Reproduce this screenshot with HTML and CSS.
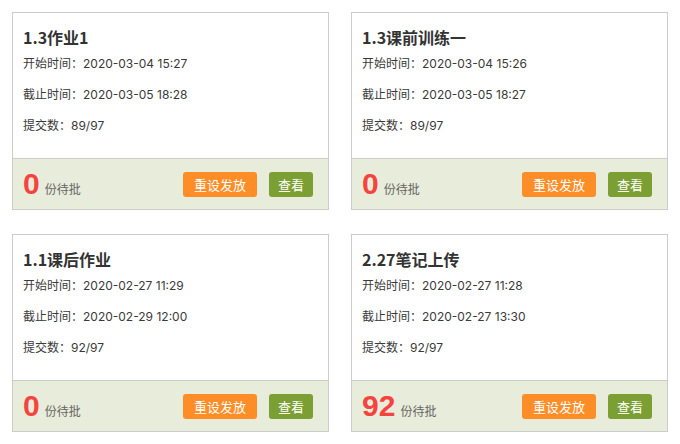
FILE: index.html
```html
<!DOCTYPE html>
<html lang="zh-CN">
<head>
<meta charset="utf-8">
<link rel="stylesheet" href="styles.css">
</head>
<body>
<div class="grid">
  <div class="card">
    <div class="card-body">
      <div class="title">1.3作业1</div>
      <div class="row">开始时间：2020-03-04 15:27</div>
      <div class="row">截止时间：2020-03-05 18:28</div>
      <div class="row">提交数：89/97</div>
    </div>
    <div class="card-foot">
      <div class="pending"><span class="num">0</span><span class="label">份待批</span></div>
      <div class="actions"><span class="btn btn-orange">重设发放</span><span class="btn btn-green">查看</span></div>
    </div>
  </div>
  <div class="card">
    <div class="card-body">
      <div class="title">1.3课前训练一</div>
      <div class="row">开始时间：2020-03-04 15:26</div>
      <div class="row">截止时间：2020-03-05 18:27</div>
      <div class="row">提交数：89/97</div>
    </div>
    <div class="card-foot">
      <div class="pending"><span class="num">0</span><span class="label">份待批</span></div>
      <div class="actions"><span class="btn btn-orange">重设发放</span><span class="btn btn-green">查看</span></div>
    </div>
  </div>
  <div class="card">
    <div class="card-body">
      <div class="title">1.1课后作业</div>
      <div class="row">开始时间：2020-02-27 11:29</div>
      <div class="row">截止时间：2020-02-29 12:00</div>
      <div class="row">提交数：92/97</div>
    </div>
    <div class="card-foot">
      <div class="pending"><span class="num">0</span><span class="label">份待批</span></div>
      <div class="actions"><span class="btn btn-orange">重设发放</span><span class="btn btn-green">查看</span></div>
    </div>
  </div>
  <div class="card">
    <div class="card-body">
      <div class="title">2.27笔记上传</div>
      <div class="row">开始时间：2020-02-27 11:28</div>
      <div class="row">截止时间：2020-02-27 13:30</div>
      <div class="row">提交数：92/97</div>
    </div>
    <div class="card-foot">
      <div class="pending"><span class="num">92</span><span class="label">份待批</span></div>
      <div class="actions"><span class="btn btn-orange">重设发放</span><span class="btn btn-green">查看</span></div>
    </div>
  </div>
</div>
</body>
</html>
```
FILE: styles.css
```css
html, body {
  margin: 0;
  padding: 0;
  background: #fff;
}
body {
  font-family: "Noto Sans CJK SC", "DejaVu Sans", sans-serif;
  color: #333;
}
.grid {
  display: grid;
  grid-template-columns: 317px 317px;
  column-gap: 22px;
  row-gap: 24px;
  padding: 12px;
}
.card {
  border: 1px solid #cccccc;
  height: 198px;
  box-sizing: border-box;
  display: flex;
  flex-direction: column;
}
.card-body {
  height: 145px;
  padding: 13px 0 0 10px;
  box-sizing: border-box;
}
.title {
  font-size: 16px;
  font-weight: bold;
  line-height: 22px;
  color: #333;
}
.row {
  font-family: "Inter", "Noto Sans CJK SC", sans-serif;
  font-size: 12px;
  line-height: 31px;
  color: #3a3a3a;
}
.card-foot {
  flex: 1;
  border-top: 1px solid #cccccc;
  background: #e8ecda;
  display: flex;
  align-items: center;
  justify-content: space-between;
  padding: 0 15px 0 10px;
}
.pending {
  display: flex;
  align-items: baseline;
  padding-bottom: 1px;
}
.num {
  font-family: "Liberation Sans", Arial, sans-serif;
  font-weight: bold;
  font-size: 30px;
  line-height: 30px;
  color: #f5443f;
}
.label {
  font-size: 12px;
  color: #666;
  margin-left: 5px;
}
.actions {
  display: flex;
  gap: 12px;
}
.btn {
  height: 25px;
  line-height: 25px;
  border-radius: 3px;
  color: #fff;
  font-size: 13px;
  text-align: center;
}
.btn-orange {
  width: 74px;
  background: #fd8d26;
}
.btn-green {
  width: 44px;
  background: #7b9f32;
}
```
